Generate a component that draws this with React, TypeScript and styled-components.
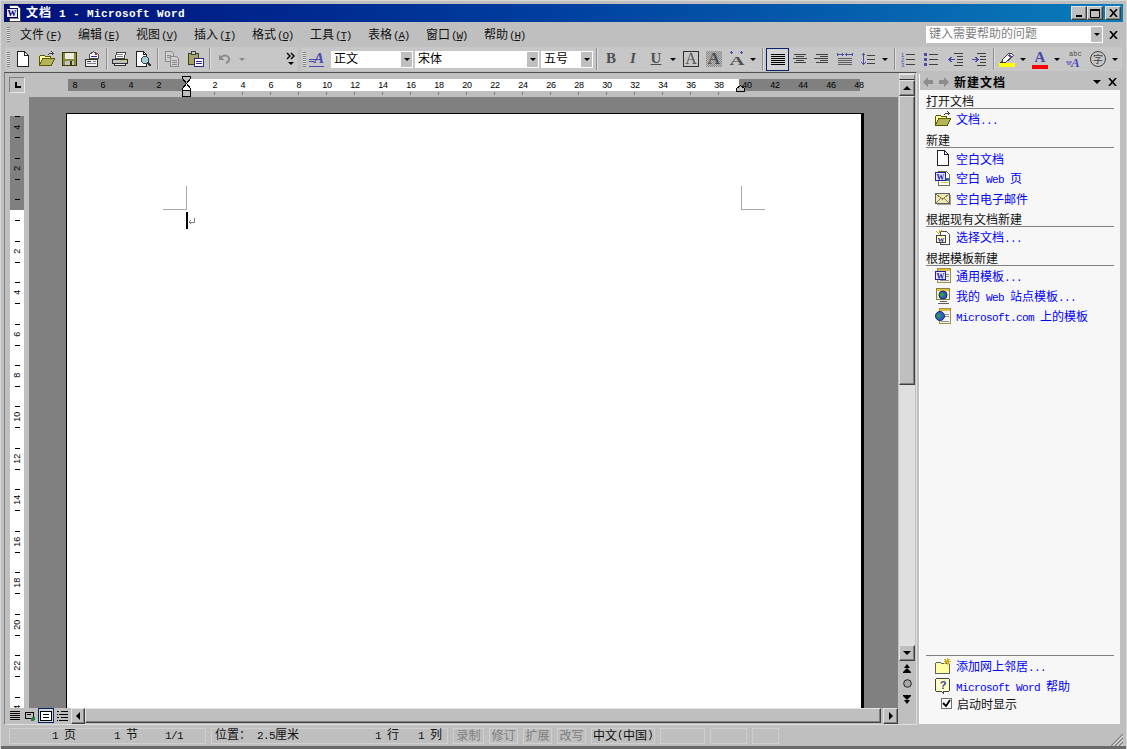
import React from 'react';
import styled, { createGlobalStyle, css } from 'styled-components';

const Global = createGlobalStyle`
  html, body { margin: 0; padding: 0; overflow: hidden; background: #bfbfbf; }
  body { font-family: "Noto Sans CJK SC", "Liberation Sans", sans-serif; font-size: 12px; color: #000; }
  * { box-sizing: border-box; }
`;

const outset = css`
  background: #bfbfbf;
  border: 1px solid;
  border-color: #e4e4e4 #404040 #404040 #e4e4e4;
  box-shadow: inset -1px -1px 0 #808080;
`;

const Window = styled.div`
  width: 1127px; height: 749px; display: flex; flex-direction: column;
  background: #bfbfbf; position: relative; overflow: hidden;
  border-style: solid; border-width: 1px 1px 0 1px; border-color: #d8d8d8; margin: 0;
  padding: 3px 3px 0;
  box-shadow: inset 0 -3px 0 #6a6a6a, inset 0 -2px 0 #505050;
`;
const Latin = styled.span`font-family: "Liberation Mono", monospace; font-size: 11px; letter-spacing: -0.6px; white-space: pre;`;
const Mixed = ({ t }: { t: string }) => (
  <>{t.split(/([\x20-\x7e]+)/).map((p, i) => (i % 2 ? <Latin key={i}>{p}</Latin> : p))}</>
);

/* ---- title ---- */
const TitleBar = styled.div`
  height: 18px; display: flex; align-items: center; padding: 0 2px;
  background: linear-gradient(90deg, #00107c, #0040a0 50%, #0a7cba);
`;
const TitleText = styled.div`
  color: #fff; font-weight: 700; letter-spacing: 1px; line-height: 18px; margin-left: 4px; flex: 1;
  ${Latin} { letter-spacing: 0.4px; }
`;
const WinBtn = styled.button<{ $ml?: number }>`
  ${outset} width: 16px; height: 14px; padding: 0; display: flex; align-items: center; justify-content: center;
  margin-left: ${p => p.$ml ?? 0}px;
`;

/* ---- menu ---- */
const MenuRow = styled.div`height: 25px; display: flex; align-items: center; padding-left: 3px;`;
const Grip = styled.i<{ $h?: number; $mr?: number }>`
  display: block; flex: none; width: 3px; height: ${p => p.$h ?? 15}px; margin-right: ${p => p.$mr ?? 0}px;
  background: repeating-linear-gradient(180deg, #808080 0 1px, #e0e0e0 1px 2px);
`;
const MenuItem = styled.div`width: 58px; padding-left: 9px; line-height: 16px; white-space: nowrap; color: #111;`;
const MenuKey = styled.span`font-family: "Liberation Mono", monospace; font-size: 11px; letter-spacing: -1.2px; margin-left: 1px;
  u { text-underline-offset: 1px; }`;
const HelpBox = styled.div`
  margin-left: auto; width: 177px; height: 17px; background: #fff; display: flex; align-items: stretch;
  color: #808080; line-height: 14px; padding-left: 3px;
  span { flex: 1; }
`;
const DropBtn = styled.div<{ $w?: number }>`
  width: ${p => p.$w ?? 11}px; flex: none; background: #bfbfbf; display: flex; align-items: center; justify-content: center; margin: 1px;
`;
const Tri = styled.i<{ $c?: string; $mr?: number; $s?: number }>`
  display: block; flex: none; width: 0; height: 0; border: ${p => p.$s ?? 3}px solid transparent; border-top: ${p => p.$s ?? 3}px solid ${p => p.$c ?? '#000'}; border-bottom: 0;
  margin-right: ${p => p.$mr ?? 0}px;
`;
const MenuClose = styled.div<{ $ml?: number; $mr?: number }>`
  width: 16px; flex: none; display: flex; justify-content: center; margin-left: ${p => p.$ml ?? 0}px; margin-right: ${p => p.$mr ?? 0}px;
`;

/* ---- toolbars ---- */
const ToolRows = styled.div`height: 24px; display: flex; gap: 3px; margin-left: 1px;`;
const Bar = styled.div<{ $w: number }>`
  width: ${p => p.$w}px; display: flex; align-items: center; background: #c7c7c7; border-radius: 2px;
`;
const GripSlot = styled.div<{ $w: number }>`width: ${p => p.$w}px; flex: none; padding-left: 2px;`;
const Tool = styled.div<{ $w?: number; $ml?: number; $on?: boolean }>`
  width: ${p => p.$w ?? 22}px; height: 23px; flex: none; margin-left: ${p => p.$ml ?? 0}px;
  display: flex; align-items: center; justify-content: center; position: relative;
  ${p => p.$on && css`border: 1px solid #0a246a; background: #d4d4d4;`}
`;
const Sep = styled.div<{ $w: number; $ml?: number }>`
  width: ${p => p.$w}px; flex: none; height: 22px; display: flex; justify-content: center; margin-left: ${p => p.$ml ?? 0}px;
  &::before { content: ""; width: 1px; background: #909090; box-shadow: 1px 0 0 #dcdcdc; }
`;
const Combo = styled.div<{ $w: number; $ml?: number }>`
  width: ${p => p.$w}px; height: 17px; flex: none; background: #fff; display: flex; align-items: stretch;
  margin-left: ${p => p.$ml ?? 0}px; padding-left: 3px; line-height: 13px; white-space: nowrap;
  span { flex: 1; }
`;
const Glyph = styled.span<{ $c?: string; $i?: boolean; $box?: boolean; $shade?: boolean; $u?: boolean }>`
  font: ${p => (p.$i ? 'italic ' : '')}700 15px/15px "Liberation Serif", serif;
  color: ${p => p.$c ?? '#505050'}; width: 16px; height: 16px; text-align: center; display: block;
  ${p => p.$u && 'text-decoration: underline;'}
  ${p => p.$box && 'border: 1px solid #303030; line-height: 14px; font-weight: 400; font-size: 16px;'}
  ${p => p.$shade && 'background: repeating-conic-gradient(#8c8c8c 0 25%, #b8b8b8 0 50%) 0 0/2px 2px; font-size: 17px;'}
`;
const ColorTool = styled.div`width: 16px; display: flex; flex-direction: column; align-items: center;`;
const ColorBar = styled.i<{ $c: string }>`display: block; width: 16px; height: 4px; background: ${p => p.$c}; margin-top: -1px;`;
const ZiCircle = styled.span`
  width: 16px; height: 16px; border: 1px solid #404040; border-radius: 50%; font-size: 10px; line-height: 13px; text-align: center; color: #404040; display: block;
`;

/* ---- doc ---- */
const Main = styled.div`height: 653px; display: flex; margin-top: 1px;`;
const Doc = styled.div`
  width: 913px; display: flex; flex-direction: column; border: 1px solid; border-color: #505050 #dedede #dedede #808080;
`;
const DocBody = styled.div`flex: 1; display: flex; min-height: 0;`;
const Workspace = styled.div`width: 893px; display: flex; flex-direction: column;`;
const RulerRow = styled.div`height: 24px; display: flex; align-items: flex-start; position: relative; flex: none;`;
const Corner = styled.div`
  width: 16px; height: 16px; margin: 4px 0 0 4px; flex: none; display: flex; align-items: center; justify-content: center;
  border: 1px solid; border-color: #808080 #e8e8e8 #e8e8e8 #808080;
`;
const HRuler = styled.div`
  width: 792px; height: 12px; margin: 6px 0 0 43px; display: flex; position: relative;
  background: linear-gradient(90deg, #808080 119px, #fff 119px 671px, #808080 671px);
`;
const RCell = styled.div<{ $tick?: boolean; $first?: boolean }>`
  width: 28px; flex: none; text-align: center; position: relative; font: 9px/12px "Liberation Sans", sans-serif; letter-spacing: -0.2px; color: #000;
  ${p => p.$first && 'margin-left: -7px;'}
  ${p => p.$tick && css`&::after { content: ""; position: absolute; left: 13px; top: 13px; width: 1px; height: 3px; background: #808080; }`}
`;
const MarkerSvg = styled.svg<{ $pos: 'l' | 'r' }>`
  position: absolute; display: block; shape-rendering: crispEdges;
  ${p => (p.$pos === 'l' ? 'left: 114px; top: -3px;' : 'left: 668px; top: 6px;')}
`;
const CanvasRow = styled.div`flex: 1; display: flex; min-height: 0;`;
const VStrip = styled.div`width: 24px; flex: none; padding: 19px 0 0 5px; overflow: hidden;`;
const VRuler = styled.div`
  width: 14px; height: 592px; overflow: hidden;
  background: linear-gradient(180deg, #808080 94px, #fff 94px);
`;
const VCells = styled.div`margin-top: -9.6px;`;
const VCell = styled.div`
  height: 41.45px; position: relative; display: flex; align-items: center; justify-content: center;
  &::before, &::after { content: ""; position: absolute; left: 5px; width: 5px; height: 1px; background: #000; }
  &::before { top: 10px; }
  &::after { top: 31px; }
`;
const VLabel = styled.span`
  writing-mode: vertical-rl; transform: rotate(180deg); font: 9px/12px "Liberation Sans", sans-serif; letter-spacing: -0.2px;
`;
const Canvas = styled.div`flex: 1; background: #808080; padding: 16px 0 0 37px; overflow: hidden; min-width: 0;`;
const Page = styled.div`
  width: 798px; height: 700px; background: #fff; position: relative;
  border-top: 1px solid #000; border-left: 1px solid #000; border-right: 3px solid #000;
`;
const CropMark = styled.i<{ $side: 'l' | 'r' }>`
  position: absolute; top: 72px; width: 24px; height: 24px; border-bottom: 1px solid #a8a8a8;
  ${p => (p.$side === 'l' ? 'left: 96px; border-right: 1px solid #a8a8a8;' : 'left: 674px; border-left: 1px solid #a8a8a8;')}
`;
const Caret = styled.i`position: absolute; left: 119px; top: 98px; width: 2px; height: 17px; background: #000;`;
const ReturnMark = styled.svg`position: absolute; left: 121px; top: 104px; shape-rendering: crispEdges;`;
const VScroll = styled.div`width: 16px; margin: 0 1px 0 1px; flex: none; display: flex; flex-direction: column; background: #dfdfdf;`;
const Split = styled.div`height: 6px; margin-top: 1px; background: #bfbfbf; border: 1px solid; border-color: #e4e4e4 #808080 #303030 #e4e4e4; flex: none;`;
const ScrollBtn = styled.div<{ $h?: number; $w?: number; $ml?: number }>`
  ${outset} width: ${p => (p.$w ? p.$w + 'px' : '100%')}; height: ${p => p.$h ?? 16}px; flex: none;
  display: flex; align-items: center; justify-content: center; margin-left: ${p => p.$ml ?? 0}px;
`;
const ArrowV = styled.i<{ $up?: boolean }>`
  display: block; width: 0; height: 0; border-left: 4px solid transparent; border-right: 4px solid transparent;
  ${p => (p.$up ? 'border-bottom: 4px solid #000;' : 'border-top: 4px solid #000;')}
`;
const ArrowH = styled.i<{ $left?: boolean }>`
  display: block; width: 0; height: 0; border-top: 4px solid transparent; border-bottom: 4px solid transparent;
  ${p => (p.$left ? 'border-right: 4px solid #000;' : 'border-left: 4px solid #000;')}
`;
const Thumb = styled.div<{ $w?: number; $h?: number }>`
  ${outset} flex: none; width: ${p => (p.$w ? p.$w + 'px' : '100%')}; height: ${p => (p.$h ? p.$h + 'px' : '100%')};
`;
const Track = styled.div`flex: 1;`;
const BrowseBtn = styled.div<{ $h: number }>`
  height: ${p => p.$h}px; flex: none; background: #bfbfbf; display: flex; align-items: center; justify-content: center;
`;
const HScroll = styled.div`height: 15px; flex: none; display: flex; align-items: stretch; margin-bottom: 1px;`;
const Views = styled.div`width: 62px; margin-left: 3px; display: flex; flex: none;`;
const ViewBtn = styled.div<{ $on?: boolean; $w: number }>`
  width: ${p => p.$w}px; flex: none; display: flex; align-items: center; justify-content: center;
  ${p => p.$on && 'border: 1px solid #0a246a; background: #d4d4d4;'}
`;

/* ---- task pane ---- */
const Pane = styled.div`
  width: 201px; margin: 2px 0 1px 2px; background: #f7f7f7; display: flex; flex-direction: column; border-left: 1px solid #fff; flex: none;
`;
const PaneHead = styled.div`
  height: 16px; flex: none; background: #bfbfbf; display: flex; align-items: center; padding-left: 2px;
`;
const PaneTitle = styled.div`font-weight: 700; letter-spacing: 1px; line-height: 16px; margin-left: 5px; flex: 1;`;
const PaneBody = styled.div`flex: 1; display: flex; flex-direction: column; padding: 0 6px;`;
const Heading = styled.div`
  height: 19px; border-bottom: 1px solid #808080; display: flex; align-items: flex-end; line-height: 14px; color: #111; flex: none;
`;
const LinkRow = styled.div`
  height: 20px; flex: none; display: flex; align-items: center; padding-left: 9px; gap: 5px; color: #0000ff; line-height: 16px; white-space: nowrap;
  span { padding-top: 2px; }
`;
const PaneFoot = styled.div`margin-top: auto; border-top: 1px solid #808080; padding-bottom: 13px; flex: none;`;
const CheckRow = styled.div`height: 15px; display: flex; align-items: center; padding-left: 15px; gap: 5px; line-height: 15px; color: #111;`;
const CheckBox = styled.div`
  width: 11px; height: 11px; border: 1px solid #707070; background: #fff; display: flex; align-items: center; justify-content: center; flex: none;
`;

/* ---- status ---- */
const Status = styled.div`height: 21px; padding: 3px 0 0 5px; display: flex; gap: 5px; position: relative; flex: none;`;
const Cell = styled.div<{ $w: number; $off?: boolean; $center?: boolean }>`
  width: ${p => p.$w}px; height: 16px; flex: none; border: 1px solid #cfcfcf; display: flex; align-items: center; line-height: 12px; white-space: nowrap;
  padding-bottom: 2px;
  color: ${p => (p.$off ? '#808080' : '#111')}; ${p => p.$center && 'justify-content: center;'}
`;
const Seg = styled.span<{ $l: number }>`margin-left: ${p => p.$l}px;`;
const ResizeGrip = styled.svg`position: absolute; right: 0; bottom: 0; shape-rendering: auto;`;

const Ico = styled.svg.attrs({ viewBox: '0 0 16 16', width: 16, height: 16 })`
  display: block; flex: none; shape-rendering: crispEdges;
`;

const NewDoc = () => <Ico><path d="M2.5 .5h7l4 4v11h-11z" fill="#fff" stroke="#222" /><path d="M9.5 .5v4h4" fill="none" stroke="#222" /></Ico>;
const OpenF = () => (
  <Ico>
    <path d="M.5 14.5v-9l1-1h4l1 1h5v2" fill="#ffff99" stroke="#5a5a00" />
    <path d="M.5 14.5l3-7h12l-3 7z" fill="#b4b45a" stroke="#5a5a00" />
    <path d="M8.5 4.5l2-2h3" fill="none" stroke="#404040" /><path d="M12.5 .5l2 2-2 2" fill="none" stroke="#404040" />
  </Ico>
);
const SaveI = () => (
  <Ico>
    <path d="M.5 1.5h14v13h-14z" fill="#8a8a40" stroke="#3c3c00" />
    <rect x="3" y="2" width="9" height="6" fill="#ecece0" /><rect x="3" y="10" width="9" height="4" fill="#c4c4c4" /><rect x="8" y="10" width="2" height="4" fill="#3c3c00" />
  </Ico>
);
const PermI = () => (
  <Ico>
    <path d="M4.5 7.5v-4l4-3 5 3v4z" fill="#f4f4f4" stroke="#505050" /><rect x="10" y="2" width="2" height="2" fill="#c02020" /><rect x="6" y="5" width="6" height="1" fill="#3030a0" />
    <rect x=".5" y="8.5" width="12" height="7" fill="#f0f0f0" stroke="#303030" /><rect x="2" y="10" width="4" height="1" fill="#404040" /><rect x="2" y="12" width="9" height="1" fill="#808080" /><rect x="8" y="10" width="3" height="1" fill="#808080" />
  </Ico>
);
const PrintI = () => (
  <Ico>
    <path d="M4.5 1.5h9l-1 6h-9z" fill="#fff" stroke="#404040" /><rect x="5" y="3" width="6" height="1" fill="#808080" /><rect x="5" y="5" width="6" height="1" fill="#808080" />
    <path d="M.5 8.5h15v4h-15z" fill="#c0c0c0" stroke="#303030" /><rect x="11" y="9" width="3" height="1" fill="#e0e000" />
    <path d="M2.5 12.5h11v2h-11z" fill="#f0f0f0" stroke="#303030" />
  </Ico>
);
const PreviewI = () => (
  <Ico>
    <path d="M.5 .5h7l3 3v12h-10z" fill="#fff" stroke="#222" /><path d="M7.5 .5v3h3" fill="none" stroke="#222" />
    <circle cx="9" cy="9" r="3.5" fill="#a0d0d8" stroke="#404040" /><path d="M12 12l3 3" stroke="#203840" strokeWidth="2" />
  </Ico>
);
const CopyI = () => (
  <Ico>
    <path d="M1.5 .5h6l2 2v8h-8z" fill="#d0d0d0" stroke="#8a8a8a" /><path d="M6.5 5.5h6l2 2v8h-8z" fill="#d0d0d0" stroke="#8a8a8a" />
    <path d="M3 4h4M3 6h3M8 9h5M8 11h5M8 13h5" stroke="#8a8a8a" />
  </Ico>
);
const PasteI = () => (
  <Ico>
    <path d="M.5 2.5h10v11h-10z" fill="#a4a46a" stroke="#404020" /><path d="M3.5 .5h4v3h-4z" fill="#c8c8c8" stroke="#404040" />
    <path d="M6.5 7.5h9v8h-9z" fill="#fff" stroke="#2a2a80" /><path d="M8 10h6M8 12h6" stroke="#2a2a80" />
  </Ico>
);
const UndoI = () => (
  <Ico>
    <path d="M3 4v5h5z" fill="#8a8a8a" /><path d="M5 6c3-2 7-2 8 1s-1 4-3 5" fill="none" stroke="#8a8a8a" strokeWidth="2" style={{ shapeRendering: 'auto' }} />
  </Ico>
);
const Chevrons = () => (
  <svg width="10" height="14" viewBox="0 0 10 14" style={{ display: 'block' }}>
    <path d="M1 1l3 3-3 3M5 1l3 3-3 3" fill="none" stroke="#000" strokeWidth="1.4" /><path d="M2 10h6l-3 3z" fill="#000" />
  </svg>
);
const StyleI = () => (
  <Ico>
    <text x="5" y="12" fontFamily="Liberation Serif" fontStyle="italic" fontWeight="700" fontSize="15" fill="#4a4ab0">A</text>
    <path d="M0 8h7M0 10h5" stroke="#4a4ab0" /><path d="M0 15h15" stroke="#4a4ab0" />
  </Ico>
);
const StretchI = () => (
  <Ico>
    <path d="M2 0h1M1 1h3M2 2h1M12 0h1M11 1h3M12 2h1" stroke="#4a4ab0" />
    <text x="8" y="14" textAnchor="middle" fontFamily="Liberation Serif" fontWeight="700" fontSize="13" fill="#505050" textLength="15" lengthAdjust="spacingAndGlyphs">A</text>
  </Ico>
);
const Lines = ({ d, c = '#404040' }: { d: string; c?: string }) => <Ico><path d={d} stroke={c} fill="none" /></Ico>;
const JustifyI = () => <Lines c="#000" d="M1 3.5h14M1 5.5h14M1 7.5h14M1 9.5h14M1 11.5h14M1 13.5h14" />;
const CenterI = () => <Lines d="M2 3.5h12M4 5.5h8M1 7.5h14M4 9.5h8M2 11.5h12" />;
const RightI = () => <Lines d="M3 3.5h12M7 5.5h8M1 7.5h14M7 9.5h8M3 11.5h12" />;
const DistI = () => (
  <Ico>
    <path d="M1 3.5h4M1 2l-1 1.500 1 1.500M5 2l1 1.500-1 1.500M10 3.500h5M10 2l-1 1.500 1 1.500M15 2l1 1.500-1 1.500" stroke="#4a4aa8" fill="none" />
    <path d="M1 7.500h14M1 9.500h14M1 11.500h14M1 13.500h14" stroke="#606060" />
  </Ico>
);
const SpaceI = () => (
  <Ico>
    <path d="M3.500 2v12M1.500 4.500l2-2 2 2M1.500 11.500l2 2 2-2" stroke="#4a4aa8" fill="none" />
    <path d="M7 4.500h8M7 8.500h8M7 12.500h8" stroke="#404040" />
  </Ico>
);
const NumI = () => (
  <Ico>
    <path d="M6 3.500h9M6 8.500h9M6 13.500h9" stroke="#404040" />
    <text x="1" y="6" fontFamily="Liberation Sans" fontSize="6" fill="#4a4aa8">1</text>
    <text x="1" y="11" fontFamily="Liberation Sans" fontSize="6" fill="#4a4aa8">2</text>
    <text x="1" y="16" fontFamily="Liberation Sans" fontSize="6" fill="#4a4aa8">3</text>
  </Ico>
);
const BulI = () => (
  <Ico>
    <rect x="1" y="2" width="3" height="3" fill="#4a4aa8" /><rect x="1" y="7" width="3" height="3" fill="#4a4aa8" /><rect x="1" y="12" width="3" height="3" fill="#4a4aa8" />
    <path d="M6 3.500h9M6 8.500h9M6 13.500h9" stroke="#404040" />
  </Ico>
);
const OutI = () => (
  <Ico>
    <path d="M6 2.500h9M9 5.500h6M9 8.500h6M9 11.500h6M6 14.500h9" stroke="#404040" />
    <path d="M1 8.500h6M3.500 6l-2.500 2.500 2.500 2.500" stroke="#4a4aa8" fill="none" />
  </Ico>
);
const InI = () => (
  <Ico>
    <path d="M6 2.500h9M9 5.500h6M9 8.500h6M9 11.500h6M6 14.500h9" stroke="#404040" />
    <path d="M1 8.500h6M4.500 6l2.500 2.500-2.500 2.500" stroke="#4a4aa8" fill="none" />
  </Ico>
);
const HighI = () => (
  <svg width="16" height="12" viewBox="0 0 16 12" style={{ display: 'block', shapeRendering: 'crispEdges' }}>
    <path d="M3 8l7-7h2l2 2v1l-7 6H4z" fill="#fff" stroke="#404040" /><path d="M10 2l3 3-2 1-2-2z" fill="#4a4ab0" /><path d="M2 9l2 2H1z" fill="#404040" />
  </svg>
);
const AbcI = () => (
  <svg width="18" height="21" viewBox="0 0 18 21" style={{ display: 'block' }}>
    <text x="3" y="7" fontFamily="Liberation Mono" fontSize="7" fill="#505050">abc</text>
    <text x="5" y="18" fontFamily="Liberation Serif" fontStyle="italic" fontWeight="700" fontSize="13" fill="#4a4ac0">A</text>
    <path d="M0 13h6M1 15h4" stroke="#4a4ac0" />
  </svg>
);
const WordPage = () => (
  <Ico>
    <path d="M3.500 1.500h8l3 3v11h-11z" fill="#fff" stroke="#707040" />
    <rect x=".5" y="2.500" width="10" height="8" fill="#e6e6ff" stroke="#2020a0" />
    <text x="5.500" y="9.500" textAnchor="middle" fontFamily="Liberation Serif" fontWeight="700" fontSize="8" fill="#2020a0">W</text>
    <rect x="11" y="8" width="3" height="3" fill="#2a70b0" /><rect x="6" y="12" width="7" height="1" fill="#e0c040" />
  </Ico>
);
const MailI = () => (
  <Ico>
    <rect x=".5" y="3.500" width="14" height="10" fill="#f0e8b0" stroke="#606060" /><path d="M1 4l6.500 5 6.500-5M1 13l5-5M14 13l-5-5" stroke="#808060" fill="none" />
    <path d="M15 5v9H2" stroke="#a0a0a0" fill="none" />
  </Ico>
);
const ExistDoc = () => (
  <Ico>
    <path d="M5.500 2.500h6l3 3v10h-9z" fill="#fff" stroke="#505050" />
    <path d="M1 2l3 3M4 1v3M1 6h3M7 1l-2 2" stroke="#c8a820" />
    <rect x="1.500" y="6.500" width="9" height="7" fill="#ffffc0" stroke="#404040" />
    <text x="6" y="12.500" textAnchor="middle" fontFamily="Liberation Serif" fontWeight="700" fontSize="7" fill="#2020a0">W</text>
  </Ico>
);
const TemplateI = () => (
  <Ico>
    <path d="M2.500 .5h13v14h-13z" fill="#f0f0f0" stroke="#a09040" /><rect x="3" y="1" width="12" height="2" fill="#e0c040" />
    <path d="M11 6h3M11 8h3M5 12h9" stroke="#909090" />
    <rect x=".5" y="3.500" width="10" height="8" fill="#e6e6ff" stroke="#2020a0" />
    <text x="5.500" y="10.500" textAnchor="middle" fontFamily="Liberation Serif" fontWeight="700" fontSize="8" fill="#2020a0">W</text>
  </Ico>
);
const Globe = ({ x, y, r }: { x: number; y: number; r: number }) => (
  <g style={{ shapeRendering: 'auto' }}>
    <circle cx={x} cy={y} r={r} fill="#2a60c0" stroke="#202060" /><path d={`M${x - 3} ${y - 2}h3l1 2-2 2-2-1z`} fill="#30a040" />
  </g>
);
const WebTplI = () => (
  <Ico>
    <rect x="1.500" y=".5" width="13" height="11" fill="#f0f0d0" stroke="#808040" /><rect x="2" y="1" width="12" height="2" fill="#e0c040" />
    <Globe x={8} y={7} r={4} /><path d="M5 13.500h7M3 15.500h11" stroke="#606060" />
  </Ico>
);
const MsTplI = () => (
  <Ico>
    <path d="M4.500 .5h11v15h-11z" fill="#f4f4f4" stroke="#a09040" /><rect x="5" y="1" width="10" height="2" fill="#e0c040" />
    <path d="M10 6h4M10 8h4M6 13h8" stroke="#909090" />
    <Globe x={5} y={8} r={4.500} />
  </Ico>
);
const NetI = () => (
  <Ico>
    <path d="M.5 15.500v-10l1-1h4l1 1h8v10z" fill="#ffffa0" stroke="#606060" />
    <path d="M12 0v7M9 3.500h7M9.500 1l5 5M14.500 1l-5 5" stroke="#d0b020" />
  </Ico>
);
const HelpI = () => (
  <Ico>
    <path d="M1.500 .5h12l1 1v11l-1 1h-5v2l-2-2h-5l-1-1v-11z" fill="#ffffc8" stroke="#404040" />
    <text x="8" y="11" textAnchor="middle" fontFamily="Liberation Sans" fontWeight="700" fontSize="11" fill="#4040a0">?</text>
  </Ico>
);
const WordTitle = () => (
  <svg width="16" height="17" viewBox="0 0 16 17" style={{ display: 'block', shapeRendering: 'crispEdges', flex: 'none' }}>
    <path d="M3.500 .5h8l3 3v13h-11z" fill="#fff" stroke="#404040" />
    <rect x=".5" y="3.500" width="11" height="9" fill="#e8e8ff" stroke="#000060" />
    <text x="6" y="11" textAnchor="middle" fontFamily="Liberation Serif" fontWeight="700" fontSize="9" fill="#000060">W</text>
    <rect x="4" y="13" width="9" height="1" fill="#808080" />
  </svg>
);
const CloseX = ({ c = '#000' }: { c?: string }) => (
  <svg width="9" height="8" viewBox="0 0 9 8" style={{ display: 'block' }}>
    <path d="M1 0l7 8M8 0L1 8" stroke={c} strokeWidth="1.600" fill="none" />
  </svg>
);
const NavArrow = ({ left }: { left?: boolean }) => (
  <svg width="10" height="10" viewBox="0 0 10 10" style={{ display: 'block', flex: 'none', marginLeft: left ? 1 : 6 }}>
    <path d={left ? 'M0 5l5-5v3h5v4H5v3z' : 'M10 5L5 0v3H0v4h5v3z'} fill="#8c8c8c" />
  </svg>
);
const BrowseUp = () => <svg width="8" height="9" style={{ display: 'block' }}><path d="M4 0l3 4H1zM4 4l4 4H0z M0 8h8v1H0z" fill="#000" /></svg>;
const BrowseDown = () => <svg width="8" height="9" style={{ display: 'block' }}><path d="M0 0h8v1H0zM4 5L0 1h8zM4 9L1 5h6z" fill="#000" /></svg>;
const BrowseDot = () => <svg width="9" height="9" style={{ display: 'block' }}><circle cx="4.500" cy="4.500" r="3.800" fill="#a8a8a8" stroke="#202020" /></svg>;

const ViewNormal = () => <Lines c="#000" d="M3 3.500h10M3 5.500h10M3 7.500h10M3 9.500h10M3 11.500h10" />;
const ViewWeb = () => <Ico><rect x="3.500" y="4.500" width="8" height="6" fill="none" stroke="#000" /><path d="M5 6h4" stroke="#000" /><circle cx="11" cy="11" r="2" fill="#208040" /></Ico>;
const ViewPrint = () => <Ico><rect x="2.500" y="3.500" width="11" height="9" fill="#fff" stroke="#000" /><path d="M5 6.500h6M5 9.500h6" stroke="#000" /></Ico>;
const ViewOutline = () => <Lines c="#000" d="M3 3.500h2M7 3.500h7M3 6.500h1M5 6.500h9M3 9.500h2M7 9.500h7M3 12.500h1M5 12.500h9" />;

const hLabels = ['8', '6', '4', '2', '', ...Array.from({ length: 24 }, (_, i) => String((i + 1) * 2))];
const vLabels = ['4', '2', '', ...Array.from({ length: 11 }, (_, i) => String((i + 1) * 2)), '4'];
const menus: [string, string][] = [['文件', 'F'], ['编辑', 'E'], ['视图', 'V'], ['插入', 'I'], ['格式', 'O'], ['工具', 'T'], ['表格', 'A'], ['窗口', 'W'], ['帮助', 'H']];

const Link = ({ icon, t }: { icon: React.ReactNode; t: string }) => (
  <LinkRow>{icon}<span><Mixed t={t} /></span></LinkRow>
);

export default function App() {
  return (
    <Window>
      <Global />
      <TitleBar>
        <WordTitle />
        <TitleText><Mixed t="文档 1 - Microsoft Word" /></TitleText>
        <WinBtn><svg width="8" height="8"><rect x="1" y="6" width="6" height="2" fill="#000" /></svg></WinBtn>
        <WinBtn $ml={0}><svg width="10" height="10"><path d="M.5 1.500h9v8h-9z M0 0h0" fill="none" stroke="#000" /><rect y="1" width="10" height="2" fill="#000" /></svg></WinBtn>
        <WinBtn $ml={2}><CloseX /></WinBtn>
      </TitleBar>
      <MenuRow>
        <Grip $mr={1} />
        {menus.map(([n, k]) => (
          <MenuItem key={k}>{n}<MenuKey>(<u>{k}</u>)</MenuKey></MenuItem>
        ))}
        <HelpBox><span>键入需要帮助的问题</span><DropBtn><Tri /></DropBtn></HelpBox>
        <MenuClose $ml={2} $mr={2}><CloseX /></MenuClose>
      </MenuRow>
      <ToolRows>
        <Bar $w={293}>
          <GripSlot $w={6}><Grip /></GripSlot>
          <Tool $w={23}><NewDoc /></Tool>
          <Tool $w={23} $ml={1}><OpenF /></Tool>
          <Tool $w={23}><SaveI /></Tool>
          <Tool $w={23}><PermI /></Tool>
          <Sep $w={4} />
          <Tool $w={23}><PrintI /></Tool>
          <Tool $w={23} $ml={1}><PreviewI /></Tool>
          <Sep $w={5} />
          <Tool $w={23}><CopyI /></Tool>
          <Tool $w={23} $ml={1}><PasteI /></Tool>
          <Sep $w={5} />
          <Tool $w={24}><UndoI /></Tool>
          <Tool $w={12}><Tri $c="#8a8a8a" /></Tool>
          <Tool $w={12} $ml={37}><Chevrons /></Tool>
        </Bar>
        <Bar $w={821}>
          <GripSlot $w={5}><Grip /></GripSlot>
          <Tool><StyleI /></Tool>
          <Combo $w={82} $ml={3}><span>正文</span><DropBtn><Tri /></DropBtn></Combo>
          <Combo $w={124} $ml={2}><span>宋体</span><DropBtn><Tri /></DropBtn></Combo>
          <Combo $w={52} $ml={2}><span>五号</span><DropBtn><Tri /></DropBtn></Combo>
          <Sep $w={6} />
          <Tool $ml={1}><Glyph>B</Glyph></Tool>
          <Tool><Glyph $i>I</Glyph></Tool>
          <Tool $ml={1}><Glyph $u>U</Glyph></Tool>
          <Tool $w={12}><Tri /></Tool>
          <Tool $ml={1}><Glyph $box>A</Glyph></Tool>
          <Tool $ml={1}><Glyph $shade>A</Glyph></Tool>
          <Tool $ml={1}><StretchI /></Tool>
          <Tool $w={10}><Tri /></Tool>
          <Sep $w={8} />
          <Tool $w={23} $on><JustifyI /></Tool>
          <Tool $w={21}><CenterI /></Tool>
          <Tool><RightI /></Tool>
          <Tool $ml={2}><DistI /></Tool>
          <Tool $ml={1}><SpaceI /></Tool>
          <Tool $w={12}><Tri /></Tool>
          <Sep $w={6} />
          <Tool><NumI /></Tool>
          <Tool $ml={1}><BulI /></Tool>
          <Tool $ml={3}><OutI /></Tool>
          <Tool $ml={1}><InI /></Tool>
          <Sep $w={6} />
          <Tool><ColorTool><HighI /><ColorBar $c="#ffff00" /></ColorTool></Tool>
          <Tool $w={10}><Tri /></Tool>
          <Tool $ml={1}><ColorTool><Glyph $c="#4a4aa8">A</Glyph><ColorBar $c="#ff0000" /></ColorTool></Tool>
          <Tool $w={12}><Tri /></Tool>
          <Tool $ml={1}><AbcI /></Tool>
          <Tool $ml={1}><ZiCircle>字</ZiCircle></Tool>
          <Tool $w={12}><Tri /></Tool>
        </Bar>
      </ToolRows>
      <Main>
        <Doc>
          <DocBody>
            <Workspace>
              <RulerRow>
                <Corner><svg width="8" height="8"><path d="M2 1h2v4h4v2H2z" fill="#000" /></svg></Corner>
                <HRuler>
                  {hLabels.map((l, i) => (
                    <RCell key={i} $first={i === 0} $tick={i > 4 && i < 24}>{l}</RCell>
                  ))}
                  <MarkerSvg $pos="l" width="10" height="21" viewBox="0 0 10 21">
                    <path d="M.5 .5h8v2l-4 5-4-5z" fill="#bfbfbf" stroke="#000" />
                    <path d="M4.500 7.500l4 5v2h-8v-2z" fill="#fff" stroke="#000" />
                    <path d="M.5 14.500h8v6h-8z" fill="#bfbfbf" stroke="#000" />
                  </MarkerSvg>
                  <MarkerSvg $pos="r" width="10" height="7" viewBox="0 0 10 7">
                    <path d="M4.500 .5l4 3v3h-8v-3z" fill="#bfbfbf" stroke="#000" />
                  </MarkerSvg>
                </HRuler>
              </RulerRow>
              <CanvasRow>
                <VStrip>
                  <VRuler>
                    <VCells>
                      {vLabels.map((l, i) => (
                        <VCell key={i}><VLabel>{l}</VLabel></VCell>
                      ))}
                    </VCells>
                  </VRuler>
                </VStrip>
                <Canvas>
                  <Page>
                    <CropMark $side="l" />
                    <CropMark $side="r" />
                    <Caret />
                    <ReturnMark width="7" height="8" viewBox="0 0 7 8">
                      <path d="M6 0v4H1M3 2L1 4l2 2" fill="none" stroke="#808080" />
                    </ReturnMark>
                  </Page>
                </Canvas>
              </CanvasRow>
            </Workspace>
            <VScroll>
              <Split />
              <ScrollBtn $h={16}><ArrowV $up /></ScrollBtn>
              <Thumb $h={289} />
              <Track />
              <ScrollBtn $h={16}><ArrowV /></ScrollBtn>
              <BrowseBtn $h={15}><BrowseUp /></BrowseBtn>
              <BrowseBtn $h={15}><BrowseDot /></BrowseBtn>
              <BrowseBtn $h={17}><BrowseDown /></BrowseBtn>
            </VScroll>
          </DocBody>
          <HScroll>
            <Views>
              <ViewBtn $w={14}><ViewNormal /></ViewBtn>
              <ViewBtn $w={16}><ViewWeb /></ViewBtn>
              <ViewBtn $w={16} $on><ViewPrint /></ViewBtn>
              <ViewBtn $w={16}><ViewOutline /></ViewBtn>
            </Views>
            <ScrollBtn $w={14} $ml={1}><ArrowH $left /></ScrollBtn>
            <Thumb $w={796} />
            <ScrollBtn $w={15} $ml={2}><ArrowH /></ScrollBtn>
          </HScroll>
        </Doc>
        <Pane>
          <PaneHead>
            <NavArrow left /><NavArrow />
            <PaneTitle>新建文档</PaneTitle>
            <Tri $s={4} $mr={3} />
            <MenuClose><CloseX /></MenuClose>
          </PaneHead>
          <PaneBody>
            <Heading>打开文档</Heading>
            <Link icon={<OpenF />} t="文档..." />
            <Heading>新建</Heading>
            <Link icon={<NewDoc />} t="空白文档" />
            <Link icon={<WordPage />} t="空白 Web 页" />
            <Link icon={<MailI />} t="空白电子邮件" />
            <Heading>根据现有文档新建</Heading>
            <Link icon={<ExistDoc />} t="选择文档..." />
            <Heading>根据模板新建</Heading>
            <Link icon={<TemplateI />} t="通用模板..." />
            <Link icon={<WebTplI />} t="我的 Web 站点模板..." />
            <Link icon={<MsTplI />} t="Microsoft.com 上的模板" />
            <PaneFoot>
              <Link icon={<NetI />} t="添加网上邻居..." />
              <Link icon={<HelpI />} t="Microsoft Word 帮助" />
              <CheckRow>
                <CheckBox><svg width="9" height="9"><path d="M1 4l3 3 4-6" fill="none" stroke="#000" strokeWidth="1.800" /></svg></CheckBox>
                启动时显示
              </CheckRow>
            </PaneFoot>
          </PaneBody>
        </Pane>
      </Main>
      <Status>
        <Cell $w={197}>
          <Seg $l={42}><Mixed t="1 页" /></Seg>
          <Seg $l={38}><Mixed t="1 节" /></Seg>
          <Seg $l={27}><Mixed t="1/1" /></Seg>
        </Cell>
        <Cell $w={237}>
          <Seg $l={3}><Mixed t="位置： 2.5厘米" /></Seg>
          <Seg $l={76}><Mixed t="1 行" /></Seg>
          <Seg $l={19}><Mixed t="1 列" /></Seg>
        </Cell>
        <Cell $w={31} $off $center>录制</Cell>
        <Cell $w={29} $off $center>修订</Cell>
        <Cell $w={29} $off $center>扩展</Cell>
        <Cell $w={29} $off $center>改写</Cell>
        <Cell $w={64} $center>中文<Latin>(</Latin>中国<Latin>)</Latin></Cell>
        <Cell $w={45} />
        <Cell $w={37} />
        <Cell $w={27} />
        <ResizeGrip width="12" height="12" viewBox="0 0 12 12">
          <path d="M12 0L0 12M12 4L4 12M12 8l-4 4" stroke="#808080" strokeWidth="1.200" />
          <path d="M12 2L2 12M12 6l-6 6M12 10l-2 2" stroke="#e8e8e8" />
        </ResizeGrip>
      </Status>
    </Window>
  );
}
